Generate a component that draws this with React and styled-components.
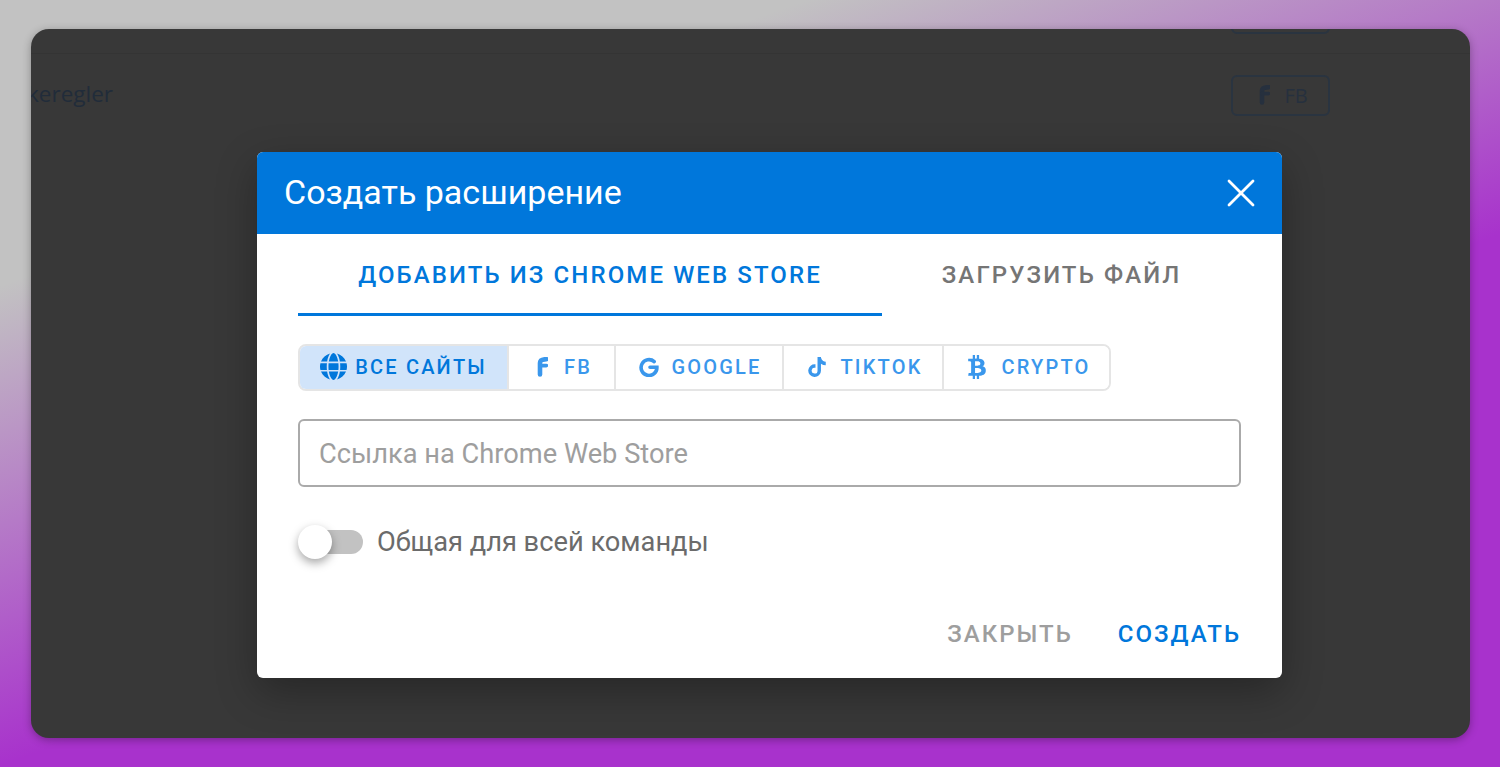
import React from 'react';
import styled, { createGlobalStyle } from 'styled-components';
import { X } from 'lucide-react';
import { FaTiktok, FaBtc } from 'react-icons/fa';
import { FaGlobe } from 'react-icons/fa6';

const GlobalStyle = createGlobalStyle`
  html, body {
    margin: 0;
    padding: 0;
  }

  body {
    font-family: Roboto, "Liberation Sans", sans-serif;
  }
`;

const Page = styled.div`
  width: 1500px;
  height: 767px;
  box-sizing: border-box;
  padding: 29px 30px 29px 31px;
  background: linear-gradient(160.5deg, #c2c2c2 22%, #a832cc 59%);
  overflow: hidden;
`;

const Window = styled.div`
  position: relative;
  height: 100%;
  border-radius: 18px;
  background: #383838;
  overflow: hidden;
  box-shadow: 0 2px 8px rgba(0, 0, 0, 0.3);
`;

const Row = styled.div`
  display: flex;
  align-items: center;
  justify-content: space-between;
  box-sizing: border-box;
  height: ${(p) => p.$height}px;
  padding-right: 140px;
  border-bottom: ${(p) => (p.$line ? '1px solid #343434' : 'none')};
  font-family: "Open Sans", sans-serif;
`;

const RowTitle = styled.span`
  margin: -2px 0 0 -4px;
  font-size: 22.5px;
  color: #212c3a;
`;

const OutlineButton = styled.div`
  display: flex;
  align-items: center;
  justify-content: center;
  gap: 14px;
  box-sizing: border-box;
  width: 99px;
  height: 41px;
  padding-left: 6px;
  border: 2px solid #2a3440;
  border-radius: 6px;
  font-size: 20px;
  color: #26303e;
  margin-top: ${(p) => p.$top || 0}px;

  svg {
    width: 11px;
    height: 20px;
  }
`;

const Overlay = styled.div`
  position: absolute;
  inset: 0;
  display: flex;
  justify-content: flex-start;
  padding: 123px 0 0 226px;
`;

const Modal = styled.div`
  width: 1025px;
  height: 526px;
  display: flex;
  flex-direction: column;
  border-radius: 6px;
  overflow: hidden;
  background: #fff;
  box-shadow: 0 14px 40px rgba(0, 0, 0, 0.3);
`;

const ModalHeader = styled.div`
  display: flex;
  align-items: center;
  justify-content: space-between;
  flex: none;
  height: 82px;
  padding: 0 17px 0 27px;
  background: #0077db;
  color: #fff;
`;

const ModalTitle = styled.h2`
  margin: -2px 0 0;
  font-size: 34px;
  font-weight: 400;
`;

const CloseIcon = styled(X)`
  display: block;
  width: 48px;
  height: 48px;
  stroke-width: 1.4;
`;

const ModalBody = styled.div`
  display: flex;
  flex-direction: column;
  flex: 1;
  padding: 0 41px;
`;

const Tabs = styled.div`
  display: flex;
  height: 82px;
  flex: none;
`;

const Tab = styled.div`
  display: flex;
  align-items: center;
  justify-content: center;
  flex: ${(p) => p.$flex};
  box-sizing: border-box;
  padding-top: 3px;
  border-bottom: 3px solid ${(p) => (p.$active ? '#0077db' : 'transparent')};
  font-size: 24px;
  font-weight: 500;
  letter-spacing: 2.1px;
  white-space: nowrap;
  color: ${(p) => (p.$active ? '#0077db' : '#757575')};
`;

const Group = styled.div`
  display: flex;
  align-self: flex-start;
  box-sizing: border-box;
  height: 47px;
  margin-top: 28px;
  border: 2px solid #e5e5e5;
  border-radius: 8px;
  overflow: hidden;
`;

const GroupButton = styled.div`
  display: flex;
  align-items: center;
  justify-content: center;
  gap: ${(p) => p.$gap}px;
  box-sizing: border-box;
  width: ${(p) => p.$width}px;
  padding: 0 0 2px ${(p) => p.$shift || 0}px;
  border-left: ${(p) => (p.$first ? 'none' : '2px solid #e5e5e5')};
  background: ${(p) => (p.$active ? '#d1e4fa' : '#fff')};
  color: ${(p) => (p.$active ? '#0077db' : '#3a97ec')};
  font-size: 20px;
  font-weight: 500;
  letter-spacing: 2.2px;
  white-space: nowrap;

  svg {
    flex: none;
    height: ${(p) => p.$icon}px;
    width: ${(p) => p.$iconWidth || p.$icon}px;
  }
`;

const LinkInput = styled.input`
  flex: none;
  box-sizing: border-box;
  width: 100%;
  height: 68px;
  margin-top: 28px;
  padding: 2px 19px 0;
  border: 2px solid #aaa;
  border-radius: 6px;
  outline: none;
  font-family: inherit;
  font-size: 27.25px;
  color: #333;

  &::placeholder {
    color: #9e9e9e;
    opacity: 1;
  }
`;

const ToggleRow = styled.div`
  display: flex;
  align-items: center;
  margin-top: 37px;
  height: 36px;
`;

const Track = styled.div`
  position: relative;
  width: 63px;
  height: 24px;
  margin-left: 2px;
  border-radius: 12px;
  background: #c2c2c2;
`;

const Thumb = styled.div`
  position: absolute;
  left: -2px;
  top: -5px;
  width: 34px;
  height: 34px;
  border-radius: 50%;
  background: #fff;
  box-shadow: 0 4px 10px rgba(0, 0, 0, 0.35);
`;

const ToggleLabel = styled.span`
  margin-left: 14px;
  font-size: 27.25px;
  color: #6b6b6b;
`;

const Footer = styled.div`
  display: flex;
  justify-content: flex-end;
  gap: 45px;
  margin-top: 60px;
`;

const FooterButton = styled.div`
  font-size: 24px;
  font-weight: 500;
  letter-spacing: 2px;
  color: ${(p) => (p.$primary ? '#0077db' : '#9e9e9e')};
`;

// The reference uses a rounded, heavier "f" and "G" than the icon packs have
const FbIcon = () => (
  <svg viewBox="0 0 11 20" fill="none" stroke="currentColor" strokeLinecap="round">
    <path d="M3 17.5V6C3 3.4 4.6 2.2 9.4 2.2" strokeWidth="4.6" />
    <path d="M3 8.6H9.4" strokeWidth="3.6" />
  </svg>
);

const GoogleIcon = () => (
  <svg viewBox="0 0 20 20" fill="none" stroke="currentColor" strokeWidth="3.6" strokeLinecap="round">
    <path d="M15.2 4.6A7.9 7.9 0 1 0 17.9 10.2H11" />
  </svg>
);

const sites = [
  { name: 'Все сайты', Icon: FaGlobe, width: 207, gap: 8, icon: 27, active: true },
  { name: 'FB', Icon: FbIcon, width: 107, gap: 16, icon: 20, iconWidth: 11, shift: 6 },
  { name: 'Google', Icon: GoogleIcon, width: 168, gap: 12, icon: 20, shift: 3 },
  { name: 'TikTok', Icon: FaTiktok, width: 160, gap: 13, icon: 20, shift: 4 },
  { name: 'Crypto', Icon: FaBtc, width: 167, gap: 12, icon: 24, shift: 3 },
];

const App = () => (
  <>
    <GlobalStyle />
    <Page>
      <Window>
        <Row $height={25} $line>
          <span />
          <OutlineButton $top={-56} />
        </Row>
        <Row $height={80}>
          <RowTitle>keregler</RowTitle>
          <OutlineButton $top={2}>
            <FbIcon />
            FB
          </OutlineButton>
        </Row>
        <Overlay>
          <Modal>
            <ModalHeader>
              <ModalTitle>Создать расширение</ModalTitle>
              <CloseIcon />
            </ModalHeader>
            <ModalBody>
              <Tabs>
                <Tab $active $flex="584 0 0">ДОБАВИТЬ ИЗ CHROME WEB STORE</Tab>
                <Tab $flex="359 0 0">ЗАГРУЗИТЬ ФАЙЛ</Tab>
              </Tabs>
              <Group>
                {sites.map(({ name, Icon, width, gap, icon, iconWidth, shift, active }, i) => (
                  <GroupButton
                    key={name}
                    $active={active}
                    $first={i === 0}
                    $width={width}
                    $gap={gap}
                    $icon={icon}
                    $iconWidth={iconWidth}
                    $shift={shift}
                  >
                    <Icon />
                    {name.toUpperCase()}
                  </GroupButton>
                ))}
              </Group>
              <LinkInput placeholder="Ссылка на Chrome Web Store" />
              <ToggleRow>
                <Track>
                  <Thumb />
                </Track>
                <ToggleLabel>Общая для всей команды</ToggleLabel>
              </ToggleRow>
              <Footer>
                <FooterButton>ЗАКРЫТЬ</FooterButton>
                <FooterButton $primary>СОЗДАТЬ</FooterButton>
              </Footer>
            </ModalBody>
          </Modal>
        </Overlay>
      </Window>
    </Page>
  </>
);

export default App;
